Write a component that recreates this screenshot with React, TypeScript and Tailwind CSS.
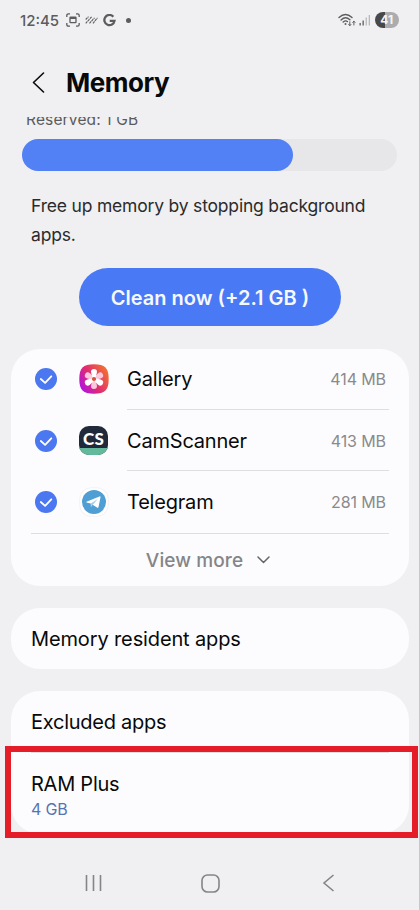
import React from "react";

function StatusBar() {
  return (
    <div className="flex h-10 shrink-0 items-center pr-[20px] pl-[20px] text-[#5c5c5e]">
      <span className="w-[40px] pt-px text-[15px] leading-10 font-medium whitespace-nowrap">12:45</span>
      <svg className="ml-[6px] shrink-0" width="14" height="14" viewBox="0 0 14 14" fill="none" stroke="currentColor" strokeWidth="1.3">
        <path d="M.8 4V2.5Q.8.8 2.5.8H4M10 .8H11.500Q13.200.8 13.200 2.500V4M13.200 10V11.500Q13.200 13.200 11.500 13.200H10M4 13.200H2.500Q.8 13.200.8 11.500V10" />
        <rect x="4" y="4.200" width="6" height="5.500" rx=".6" />
        <path d="M4 5h6" strokeWidth="2" />
      </svg>
      <svg className="ml-[5px] shrink-0" width="13" height="8" viewBox="0 0 13 8" fill="none" stroke="currentColor" strokeWidth="1.100">
        <path d="M.7 3.500 3.500.7M.7 7.300l6-6.500M4.500 7.300l5-5.500M8 7.300l4.500-5.500" strokeDasharray="2.500 .6" />
      </svg>
      <svg className="ml-[5px] shrink-0" width="13" height="13" viewBox="0 0 13 13" fill="none" stroke="currentColor" strokeWidth="2.300">
        <path d="M10.300 2.700A5.100 5.100 0 1 0 11.500 6.900H6.700" />
      </svg>
      <span className="ml-[10px] size-[5px] rounded-full bg-[#5c5c5e]" />
      <div className="ml-auto flex items-center">
        <svg width="18" height="14" viewBox="0 0 18 14" fill="none" stroke="currentColor" strokeWidth="1.400" strokeLinecap="round">
          <path d="M1 4.500Q7.500-1.700 14 4.500M3.100 7Q7.500 2.700 11.900 6.800M5.200 9Q7.500 7 9.400 8.600" />
          <circle cx="7.500" cy="11" r="1" fill="currentColor" stroke="none" />
          <path d="M11.800 8.800v3.700M10.700 11.500l1.100 1.200 1.100-1.200M15.900 12V8.300M14.800 9.400l1.100-1.200 1.100 1.200" strokeWidth="1" />
        </svg>
        <svg className="ml-[3px]" width="12" height="12" viewBox="0 0 12 12">
          <path d="M.5 9h1.300v2.500H.5zM3.500 6.500h1.300v5H3.500z" fill="#5c5c5e" />
          <path d="M6.600 3.500h1.300v8H6.600zM9.700 1H11v10.500H9.700z" fill="#b9b9bc" />
        </svg>
        <div className="ml-[4px] flex h-4 w-[24.500px] items-center justify-center rounded-full bg-[linear-gradient(90deg,#48484a_41%,#acacae_41%)] text-[12px] font-bold text-[#f4f4f5]">
          41
        </div>
      </div>
    </div>
  );
}

function Check() {
  return (
    <svg width="22" height="22" viewBox="0 0 22 22">
      <circle cx="11" cy="11" r="11" fill="#4b78f0" />
      <path d="m5.800 11 4.300 3.800 6.200-6.500" fill="none" stroke="#fff" strokeWidth="1.800" strokeLinecap="round" strokeLinejoin="round" />
    </svg>
  );
}

function GalleryIcon() {
  return (
    <svg width="30" height="30" viewBox="0 0 30 30">
      <defs>
        <linearGradient id="gallery" x1="0" y1=".8" x2="1" y2=".2">
          <stop offset="0" stopColor="#b012e8" />
          <stop offset=".45" stopColor="#df2c70" />
          <stop offset="1" stopColor="#f5742c" />
        </linearGradient>
      </defs>
      <path d="M15 .3C26 .3 29.700 4 29.700 15S26 29.700 15 29.700.3 26 .3 15 4 .3 15 .3Z" fill="url(#gallery)" />
      {[60, 180, 300, 0, 120, 240].map((angle) => (
        <path
          key={angle}
          d="M13.500 14 12.200 9C11.500 6.300 12.800 4.900 15 4.900S18.500 6.300 17.800 9L16.500 14Z"
          transform={`rotate(${angle} 15 15)`}
          fill={angle % 120 === 60 ? "#fbc8dc" : "#fff"}
        />
      ))}
      <circle cx="15" cy="15" r="2.100" fill="#dc5038" />
    </svg>
  );
}

function CamScannerIcon() {
  return (
    <div className="flex size-[29px] flex-col overflow-hidden rounded-[10px] bg-[#212a3a]">
      <span className="flex h-[22px] items-center justify-center pt-[3px] font-[Lato,sans-serif] text-[17px] leading-none font-black tracking-[0.300px] text-white">CS</span>
      <span className="h-[7px] bg-[#62b99b]" />
    </div>
  );
}

function TelegramIcon() {
  return (
    <svg width="30" height="30" viewBox="0 0 30 30">
      <rect x=".8" y=".8" width="28.400" height="28.400" rx="11" fill="#fff" stroke="#f1f1f3" />
      <circle cx="15" cy="15" r="12" fill="#509fd4" />
      <path d="M7.400 14.800 20.500 9.400C21.300 9.100 21.700 9.500 21.500 10.300L19.500 19.900C19.300 20.800 18.700 21 18 20.500L11.600 16.500 7.500 15.500Z" fill="#fff" />
      <path d="M11.600 16.400 18.800 11.900 13.900 17.800 11.900 20.300Z" fill="#a9cfea" />
    </svg>
  );
}

function AppRow({ icon, name, size, last = false }: { icon: React.ReactNode; name: React.ReactNode; size: string; last?: boolean }) {
  return (
    <div className="flex h-[61.500px] shrink-0 items-center pl-6">
      <div className="pt-px">
        <Check />
      </div>
      <div className="ml-[21.500px] flex w-[30px] justify-center pt-px">{icon}</div>
      <div className={`ml-[18.500px] flex h-full w-[262px] items-center justify-between border-b pt-[2px] pr-[3px] ${last ? "border-transparent" : "border-[#dededf]"}`}>
        {name}
        <span className="text-[16px] tracking-[-0.100px] text-[#8a8a8c]">{size}</span>
      </div>
    </div>
  );
}

export default function App() {
  return (
    <div className="relative flex h-[910px] w-[420px] flex-col overflow-hidden border-r border-[#c8c8ca] bg-[#f0f0f2] font-[Inter,sans-serif] text-[#090909]">
      <StatusBar />
      <header className="flex h-[77px] shrink-0 items-center pt-[7px] pl-[32px]">
        <svg width="13" height="21" viewBox="0 0 13 21" fill="none" stroke="currentColor" strokeWidth="1.600" strokeLinecap="round" strokeLinejoin="round">
          <path d="M11.500 1 1.500 10.500l10 9.500" />
        </svg>
        <h1 className="ml-[21px] pt-[2px] text-[26px] leading-8 font-bold tracking-[-0.500px]">Memory</h1>
      </header>
      <div className="flex h-[11px] shrink-0 items-end overflow-hidden pl-[26px] text-[#5b5b5d]">
        <span className="-mb-[1.500px] text-[15.500px] leading-[20px] tracking-[0.150px] whitespace-nowrap">Reserved: 1 GB</span>
      </div>
      <div className="mt-[11px] ml-[22px] h-[31.500px] w-[375px] shrink-0 rounded-full bg-[#e7e7e9]">
        <div className="h-full w-[271px] rounded-full bg-[#5281f5]" />
      </div>
      <p className="mt-[20.500px] ml-[31px] shrink-0 text-[17.500px] leading-[29px] tracking-[-0.190px] whitespace-nowrap text-[#2b2b2d]">
        Free up memory by stopping background
        <br />
        apps.
      </p>
      <button className="mt-[19px] ml-[79px] h-[58px] w-[262px] shrink-0 rounded-full bg-[#4979f4] pt-px text-[20px] font-semibold whitespace-nowrap text-[#f5f8ff]">
        Clean now (+2.1 GB )
      </button>

      <section className="mt-[23px] ml-[11px] flex h-[237px] w-[398px] shrink-0 flex-col rounded-[29px] bg-[#fcfcfe]">
        <div className="-mt-[0.800px] flex flex-col">
          <AppRow icon={<GalleryIcon />} name={<span className="text-[20px] tracking-[-0.200px]">Gallery</span>} size="414 MB" />
          <AppRow icon={<CamScannerIcon />} name={<span className="text-[20px] tracking-[-0.200px]">CamScanner</span>} size="413 MB" />
          <AppRow last icon={<TelegramIcon />} name={<span className="text-[20px] tracking-[-0.200px]">Telegram</span>} size="281 MB" />
        </div>
        <div className="mx-5 flex h-[54px] items-center justify-center border-t border-[#dededf] pt-px pr-[4px] text-[#858587]">
          <span className="pt-px text-[19px] font-medium tracking-[0.100px]">View more</span>
          <svg className="ml-[14px]" width="13" height="8" viewBox="0 0 13 8" fill="none" stroke="#666668" strokeWidth="1.500" strokeLinecap="round" strokeLinejoin="round">
            <path d="m1 1 5.500 5.500L12 1" />
          </svg>
        </div>
      </section>

      <section className="mt-[22px] ml-[11px] flex h-[61px] w-[398px] shrink-0 items-center rounded-[29px] bg-[#fcfcfe] pt-px pl-[20px]">
        <span className="text-[20px] tracking-[-0.130px]">Memory resident apps</span>
      </section>

      <section className="mt-[22px] ml-[11px] flex h-[143px] w-[398px] shrink-0 flex-col rounded-[29px] bg-[#fcfcfe] px-[20px]">
        <div className="flex h-[61.500px] items-center border-b border-[#dededf] pt-[2px]">
          <span className="text-[20px] tracking-[-0.250px]">Excluded apps</span>
        </div>
        <div className="flex flex-col pt-[18px]">
          <span className="text-[20px] leading-[26px] tracking-[-0.250px]">RAM Plus</span>
          <span className="text-[16px] leading-[24px] tracking-[-0.200px] text-[#5773b0]">4 GB</span>
        </div>
      </section>

      <nav className="mt-auto flex h-[54px] shrink-0 items-center pl-[85px] text-[#858588]">
        <svg width="17" height="18" viewBox="0 0 17 18" stroke="currentColor" strokeWidth="1.600">
          <path d="M1.500 1v16M8.500 1v16M15.500 1v16" />
        </svg>
        <svg className="ml-[99px]" width="19" height="19" viewBox="0 0 19 19" fill="none" stroke="currentColor" strokeWidth="1.600">
          <rect x="1" y="1" width="17" height="17" rx="5.500" />
        </svg>
        <svg className="ml-[102px]" width="13" height="18" viewBox="0 0 13 18" fill="none" stroke="currentColor" strokeWidth="1.600">
          <path d="M11.500 1 2 9l9.500 8" />
        </svg>
      </nav>

      <div className="absolute top-[746px] left-[5px] h-[92px] w-[413px] border-[6px] border-[#e41d28]" />
    </div>
  );
}
